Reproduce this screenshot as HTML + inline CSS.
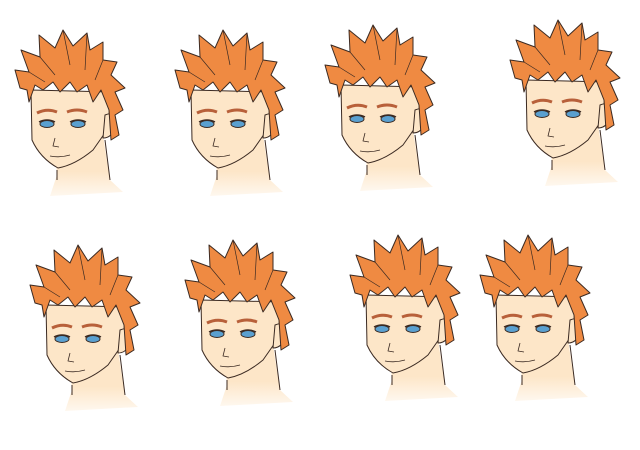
<!DOCTYPE html><html><head><style>html,body{margin:0;background:#fff;width:640px;height:450px;overflow:hidden}</style></head><body>
<svg width="640" height="450" viewBox="0 0 640 450" xmlns="http://www.w3.org/2000/svg">
<defs>
<linearGradient id="nk" x1="0" y1="0" x2="0" y2="1"><stop offset="0.6" stop-color="#fde6c8"/><stop offset="1" stop-color="#fde6c8" stop-opacity="0.3"/></linearGradient>
<g id="h" stroke="#3b2a22" stroke-width="1" stroke-linejoin="round">
<path d="M40,120 L88,105 L95,150 L108,162 L35,166 L42,145 Z" fill="url(#nk)" stroke="none"/>
<path d="M42,140 L42,150 M90,110 L95,150" fill="none"/>
<path d="M16,60 L17,110 Q25,128 43,138 Q60,135 78,120 L92,100 L97,62 Z" fill="#fde6c8"/>
<path d="M90,85 Q102,80 100,95 Q98,108 88,108 Z" fill="#fde6c8"/>
<path d="M5,58 L0,40 L14,42 L6,20 L25,27 L24,5 L40,18 L48,0 L58,16 L72,3 L75,20 L88,12 L88,30 L102,32 L96,45 L110,58 L100,62 L108,80 L100,85 L104,105 L96,110 L94,80 L86,60 L78,72 L72,55 L62,62 L55,52 L45,62 L38,52 L28,60 L20,55 L14,72 L12,60 Z" fill="#ef8a42"/>
<path d="M25,27 L40,45 M48,0 L55,35 M72,3 L70,40 M88,30 L80,50 M14,42 L30,52" fill="none" stroke-width="0.7"/>
<path d="M22,83 Q32,78 42,82 M52,82 Q62,78 72,82" fill="none" stroke="#b8603a" stroke-width="3"/>
<ellipse cx="32" cy="94" rx="7" ry="3.5" fill="#5aa0d0"/>
<ellipse cx="63" cy="94" rx="7" ry="3.5" fill="#5aa0d0"/>
<path d="M24,92 Q32,88 40,92 M55,92 Q63,88 71,92" fill="none" stroke-width="1.5"/>
<path d="M40,108 L38,116 L44,117 M35,126 Q45,128 55,125" fill="none" stroke-width="0.8"/>
</g>
</defs>
<use href="#h" x="15" y="30"/>
<use href="#h" x="175" y="30"/>
<use href="#h" x="325" y="25"/>
<use href="#h" x="510" y="20"/>
<use href="#h" x="30" y="245"/>
<use href="#h" x="185" y="240"/>
<use href="#h" x="350" y="235"/>
<use href="#h" x="480" y="235"/>
</svg>
</body></html>
